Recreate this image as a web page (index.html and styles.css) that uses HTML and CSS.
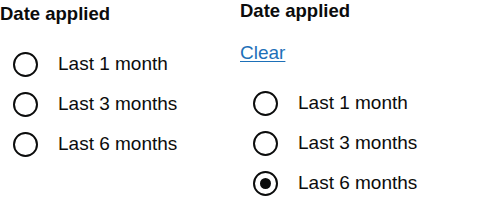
FILE: index.html
```html
<!DOCTYPE html>
<html>
<head>
<meta charset="utf-8">
<link rel="stylesheet" href="styles.css">
</head>
<body>
<div class="page">
  <section class="filter filter--plain">
    <h2 class="filter__title">Date applied</h2>
    <div class="options">
      <label class="option"><span class="radio"></span><span class="option__label">Last 1 month</span></label>
      <label class="option"><span class="radio"></span><span class="option__label">Last 3 months</span></label>
      <label class="option"><span class="radio"></span><span class="option__label">Last 6 months</span></label>
    </div>
  </section>
  <section class="filter">
    <h2 class="filter__title">Date applied</h2>
    <a class="clear" href="#">Clear</a>
    <div class="options">
      <label class="option"><span class="radio"></span><span class="option__label">Last 1 month</span></label>
      <label class="option"><span class="radio"></span><span class="option__label">Last 3 months</span></label>
      <label class="option"><span class="radio radio--checked"></span><span class="option__label">Last 6 months</span></label>
    </div>
  </section>
</div>
</body>
</html>
```
FILE: styles.css
```css
html, body {
  margin: 0;
  padding: 0;
  background: #ffffff;
}
body {
  font-family: "Liberation Sans", Arial, Helvetica, sans-serif;
  color: #0b0c0c;
}
.page {
  display: flex;
  width: 480px;
  height: 203px;
  overflow: hidden;
}
.filter {
  width: 240px;
  display: flex;
  flex-direction: column;
  align-items: flex-start;
}
.filter--plain {
  padding-top: 3px;
}
.filter__title {
  margin: 0;
  font-size: 18.5px;
  font-weight: 700;
  line-height: 21px;
}
.clear {
  margin-top: 21px;
  font-size: 19px;
  line-height: 21px;
  color: #1d70b8;
  text-decoration: underline;
  text-underline-offset: 2px;
}
.options {
  margin-top: 20px;
  display: flex;
  flex-direction: column;
}
.option {
  display: flex;
  align-items: center;
  height: 40px;
  font-size: 19px;
}
.radio {
  box-sizing: border-box;
  width: 25px;
  height: 25px;
  margin-left: 13px;
  margin-right: 20px;
  border: 2px solid #0b0c0c;
  border-radius: 50%;
  display: flex;
  align-items: center;
  justify-content: center;
}
.radio--checked::after {
  content: "";
  width: 11px;
  height: 11px;
  border-radius: 50%;
  background: #0b0c0c;
}
```
